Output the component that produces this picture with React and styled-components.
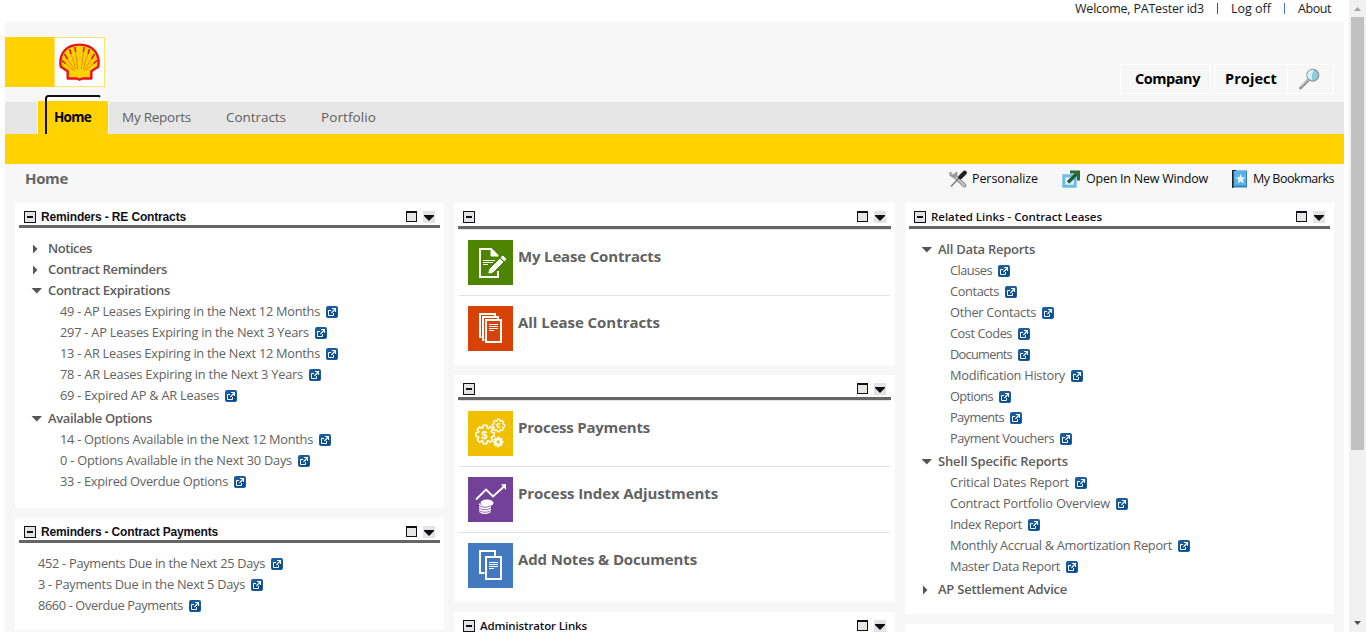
import React, { useLayoutEffect, useRef, useState } from "react";
import styled, { createGlobalStyle, css } from "styled-components";

const GlobalStyle = createGlobalStyle`
  * { box-sizing: border-box; }
  html, body { margin: 0; height: 100%; overflow: hidden; background: #fff; }
  body { font-family: "Open Sans", "Noto Sans", sans-serif; font-size: 13px; color: #5f5f5f; }
`;

const FitText = styled.span`
  display: inline-block;
  white-space: nowrap;
  flex: none;
`;

function Fit({ w, children }) {
  const ref = useRef(null);
  const [spacing, setSpacing] = useState(0);
  useLayoutEffect(() => {
    const natural = ref.current.getBoundingClientRect().width;
    setSpacing((w - natural) / children.length);
  }, []);
  return <FitText ref={ref} style={{ letterSpacing: spacing }}>{children}</FitText>;
}

const Window = styled.div`
  display: flex;
  height: 632px;
  overflow: hidden;
`;
const Page = styled.div`
  width: 1344px;
  padding-left: 5px;
  flex: none;
`;
const TopBar = styled.div`
  height: 22px;
  display: flex;
  justify-content: flex-end;
  padding: 0 13px 6px 0;
  align-items: center;
  color: #1c1c1c;
  font-size: 12.5px;
`;
const Divider = styled.span`
  width: 1px;
  height: 11px;
  margin: 0 13px;
  background: ${(p) => p.$color};
`;
const Body = styled.div`
  background: #f7f7f7;
  height: 610px;
`;
const Header = styled.div`
  height: 80px;
  display: flex;
  justify-content: space-between;
  padding: 15px 10px 0 0;
`;
const Logo = styled.div`
  display: flex;
  width: 100px;
  height: 50px;
  background: #ffd200;
  padding-left: 49px;
`;
const LogoBox = styled.div`
  width: 51px;
  height: 50px;
  background: #fff;
  border: 1px solid #ffe36b;
  padding: 5px 0 0 4px;
`;
const SearchTabs = styled.div`
  display: flex;
  margin-top: 27px;
`;
const SearchTab = styled.div`
  height: 30px;
  width: ${(p) => p.$w}px;
  margin-right: ${(p) => p.$gap || 0}px;
  padding: 0 0 ${(p) => (p.$joined ? 0 : 2)}px ${(p) => p.$pad}px;
  border: 1px solid #fff;
  border-left-width: ${(p) => (p.$joined ? 0 : 1)}px;
  display: flex;
  align-items: center;
  font-weight: 700;
  font-size: 14.5px;
  color: #000;
`;
const Nav = styled.div`
  height: 32px;
  background: #e6e6e6;
  display: flex;
  padding-left: 32px;
  font-size: 13.5px;
`;
const ActiveTab = styled.div`
  position: relative;
  width: 72px;
  height: 33px;
  margin-top: -1px;
  padding: 0 0 1px 16px;
  border: solid #fff;
  border-width: 0 1px;
  background: #ffd200;
  color: #000;
  font-weight: 700;
  display: flex;
  align-items: center;
`;
const FocusRing = styled.svg`
  position: absolute;
  left: -1px;
  top: -6px;
`;
const Tab = styled.div`
  display: flex;
  align-items: center;
  padding-bottom: 3px;
  margin-left: ${(p) => p.$gap}px;
`;
const YellowBar = styled.div`
  height: 30px;
  background: #ffd200;
`;
const TitleRow = styled.div`
  height: 39px;
  padding: 0 10px 9px 20px;
  display: flex;
  align-items: center;
  justify-content: space-between;
`;
const PageTitle = styled.div`
  font-size: 15px;
  font-weight: 700;
  color: #666;
  padding-bottom: 2px;
`;
const Tools = styled.div`
  display: flex;
  gap: 24px;
`;
const Tool = styled.div`
  display: flex;
  align-items: center;
  gap: 5px;
  color: #0c0c0c;
  font-size: 12.5px;
  ${FitText} { padding-bottom: 2px; }
`;
const Columns = styled.div`
  display: grid;
  grid-template-columns: 429px 441px 429px;
  gap: 10px;
  padding-left: 10px;
  height: 429px;
  overflow: hidden;
`;
const Column = styled.div`
  display: flex;
  flex-direction: column;
  gap: 10px;
`;
const Panel = styled.section`
  background: #fff;
  height: ${(p) => p.$h}px;
  flex: none;
  padding: 0 4px;
`;
const PanelHead = styled.div`
  height: ${(p) => p.$h}px;
  border-bottom: 3px solid #666;
  padding: 8px 5px 0;
  display: flex;
  align-items: flex-start;
`;
const PanelTitle = styled.div`
  flex: 1;
  margin-left: 5px;
  line-height: 12px;
  color: #101018;
  ${(p) =>
    p.$arial
      ? css`font: 700 12px/12px "Liberation Sans", Arial, sans-serif;`
      : css`font-size: 11.5px; font-weight: 600;`}
`;
const Controls = styled.div`
  display: flex;
  gap: 6px;
`;
const Tree = styled.div`
  padding: ${(p) => p.$top}px 0 0 ${(p) => p.$left}px;
`;
const Group = styled.div`
  height: 21px;
  margin-top: ${(p) => (p.$spaced ? 2 : 0)}px;
  padding-bottom: 2px;
  display: flex;
  align-items: center;
  font-weight: 600;
  color: #5c5c5c;
`;
const Arrow = styled.span`
  width: 17px;
  height: 12px;
  margin-top: 1px;
  display: flex;
  svg { display: block; }
`;
const LinkRow = styled.div`
  height: 21px;
  padding-left: ${(p) => p.$indent}px;
  display: flex;
  align-items: center;
  gap: 6px;
  font-size: 12.8px;
  color: #626262;
  ${FitText} { padding-bottom: 2px; }
`;
const TileRow = styled.div`
  height: 66px;
  margin: 0 1px;
  border-top: 1px solid #e3e3e3;
  padding: 10px 9px;
  display: flex;
  gap: 5px;
  font-size: 15px;
  font-weight: 700;
  line-height: 33px;
  color: #626262;
`;
const Tile = styled.div`
  width: 45px;
  height: 45px;
  background: ${(p) => p.$bg};
  svg { display: block; }
`;
const ScrollTrack = styled.div`
  width: 17px;
  margin-left: 5px;
  background: #f1f1f1;
  display: flex;
  flex-direction: column;
  align-items: center;
  justify-content: space-between;
`;
const ScrollThumb = styled.div`
  width: 13px;
  height: 433px;
  background: #c1c1c1;
  margin-bottom: auto;
`;

const ShellLogo = () => (
  <svg width="41" height="38" viewBox="0 0 41 38">
    <path d="M8.700 35.500v-7.200L1.800 23.800C-.5 10 8 1.600 20.500 1.600s21 8.400 18.700 22.200l-6.900 4.500v7.200h-8.600l-3.200 1.200-3.200-1.200z" fill="#ffd200" stroke="#e8111c" strokeWidth="2.400" strokeLinejoin="round" />
    <path d="m18.700 26-2.700-22M22.300 26 25 4M17 26.500 10.500 6M24 26.500 30.500 6M15.500 27 5.500 11M25.500 27l10-16M14.500 27.500 3 17.500M26.500 27.500 38 17.500" stroke="#f4701c" strokeWidth=".8" />
    <path d="m16.600 9-.6-5M24.400 9l.6-5M12 11l-1.500-5M29 11l1.500-5M8.500 16l-3-5M32.500 16l3-5M6.500 20.500l-3.500-3M34.500 20.500l3.500-3" stroke="#e8111c" strokeWidth="1.500" />
  </svg>
);
const SearchIcon = () => (
  <svg width="21" height="22" viewBox="0 0 21 22">
    <path d="M1.500 20 9 12.500" stroke="#8b8b8b" strokeWidth="2.600" strokeLinecap="round" />
    <path d="M1.500 19.300 9 11.800" stroke="#ddd" strokeWidth="1" />
    <circle cx="13.800" cy="7.200" r="5.900" fill="#8fcbd9" stroke="#8d979b" strokeWidth="1.200" />
    <path d="M9.500 10.500a5.300 5.300 0 0 1 5.500-8.500c-2 3-2.500 6-2 10.200z" fill="#d8eff4" />
  </svg>
);
const ToolsIcon = () => (
  <svg width="18" height="18" viewBox="0 0 18 18">
    <path d="m5 5.500 10.500 10" stroke="#858585" strokeWidth="3.800" strokeLinecap="round" />
    <path d="m5 5.500 10.500 10" stroke="#c4c4c4" strokeWidth="2.200" strokeLinecap="round" />
    <path d="M1.500 2 1.500 5l3 2L7.500 5l-.5-3" fill="none" stroke="#999" strokeWidth="2.200" />
    <path d="M2 16.500 10 8" stroke="#777" strokeWidth="1.300" />
    <path d="M11.500 7 15.700 2.700" stroke="#1f1f1f" strokeWidth="4.300" strokeLinecap="round" />
  </svg>
);
const NewWindowIcon = () => (
  <svg width="19" height="18" viewBox="0 0 19 18">
    <path d="M1.800 5.800h11.400v10.400H1.800z" fill="#e4f4fd" stroke="#6bbcec" strokeWidth="3" />
    <path d="M6 12.500 14.500 4" stroke="#1f5e2a" strokeWidth="3.400" />
    <path d="M8 .5h10v10h-3V5.700L13 3.500H8z" fill="#2d6b33" />
  </svg>
);
const BookmarkIcon = () => (
  <svg width="16" height="18" viewBox="0 0 16 18">
    <path d="M.5.500h14.500v17H.5z" fill="#2f86c6" />
    <path d="M2 1h12v14.500H2z" fill="#5cb0e4" />
    <path d="M0 0h1.500v18H0zM0 0h4v1H0z" fill="#1a2a35" />
    <path d="m8.700 4 1.400 3.300 3.600.2-2.800 2.300 1 3.600-3.200-2-3.100 2 .9-3.600-2.700-2.300 3.500-.2z" fill="#e4f4ff" />
  </svg>
);
const CollapseIcon = () => (
  <svg width="12" height="12" viewBox="0 0 12 12">
    <rect x=".5" y=".5" width="11" height="11" fill="#e3e3e3" stroke="#101018" />
    <path d="M3 5h6v2H3z" fill="#101018" />
  </svg>
);
const MaximizeIcon = () => (
  <svg width="11" height="12" viewBox="0 0 11 12">
    <rect x=".5" y=".5" width="10" height="10" fill="#e6e6e6" stroke="#101018" />
    <path d="M0 0h11v2H0z" fill="#101018" />
  </svg>
);
const MenuIcon = () => (
  <svg width="12" height="12" viewBox="0 0 12 12">
    <path d="M0 0h12v12H0z" fill="#e3e3e3" />
    <path d="M1 4h10v1l-5 5-5-5z" fill="#101018" />
  </svg>
);
const PopIcon = () => (
  <svg width="12" height="12" viewBox="0 0 12 12">
    <rect width="12" height="12" rx="2" fill="#1a5c9c" />
    <path d="M1 6h10v5H1z" fill="#074c8e" />
    <path d="M5 4.500H2.500v5h5V7" fill="none" stroke="#fff" />
    <path d="M6 2h4v4H9V4.200L5.700 7.500 5 6.800 8.200 3H6z" fill="#fff" />
  </svg>
);
const Triangle = ({ open }) => (
  <svg width="12" height="12" viewBox="0 0 12 12">
    <path d={open ? "M.5 4h10.500L5.800 9.500z" : "M2 2.500v9L6.500 7z"} fill="#555" />
  </svg>
);

const EditArt = () => (
  <svg width="45" height="45" fill="none" stroke="#fff">
    <path d="M30 31v6H12V9h11l7 7" strokeWidth="2" />
    <path d="M23 9v7h7z" fill="#fff" />
    <path d="M15 20.500h12M15 22.500h10M15 24.500h5" strokeWidth="1" />
    <path d="m19 35 2-6L32 18l4 4-11 11z" fill="#fff" stroke="#4d8400" strokeWidth="1" />
    <path d="m33 17.500 2-1.500 3 3-1.500 2z" fill="#fff" />
    <path d="m20 33 2.500 1.500" stroke="#4d8400" />
  </svg>
);
const StackArt = () => (
  <svg width="45" height="45" fill="none" stroke="#fff">
    <path d="M13.500 31H12V8h15v2M16.500 34H15V11h15v2" strokeWidth="2" />
    <path d="M18 14h15v22H18z" strokeWidth="2" />
    <path d="M21 18.500h9M21 20.500h9M21 22.500h9M21 24.500h5" strokeWidth="1" />
  </svg>
);
const DocsArt = () => (
  <svg width="45" height="45" fill="none" stroke="#fff" strokeWidth="2">
    <path d="M16.500 30H12V8h15v5" />
    <path d="M18 14h15v22H18z" />
    <path d="M21 19.500h9M21 21.500h9M21 23.500h9M21 25.500h5" strokeWidth="1" />
  </svg>
);
const gearPath = (cx, cy, outer, inner) => {
  const pts = [];
  for (let i = 0; i < 8; i++) {
    [[-0.31, inner], [-0.19, outer], [0.19, outer], [0.31, inner]].forEach(([o, r]) => {
      const a = (i * Math.PI) / 4 + o;
      pts.push(`${(cx + r * Math.cos(a)).toFixed(2)} ${(cy + r * Math.sin(a)).toFixed(2)}`);
    });
  }
  return `M${pts.join("L")}z`;
};
const CoinText = styled.text`
  font: 700 ${(p) => p.$size}px "Liberation Sans", Arial, sans-serif;
  fill: #fff;
  stroke: none;
  text-anchor: middle;
`;
const GearsArt = () => (
  <svg width="45" height="45" fill="none" stroke="#fff">
    <path d={gearPath(17, 23.500, 9.300, 7)} strokeWidth="1.500" />
    <path d={gearPath(30.500, 14.500, 6.200, 4.700)} strokeWidth="1.200" />
    <path d={gearPath(30.200, 31, 5, 3.800)} fill="#fff" strokeWidth=".5" />
    <circle cx="30.200" cy="31" r="1.700" fill="#f0c000" stroke="none" />
    <CoinText $size={11} x="16.500" y="27.500">$</CoinText>
    <CoinText $size={8} x="30.500" y="17.400">€</CoinText>
  </svg>
);
const ChartArt = () => (
  <svg width="45" height="45" fill="none" stroke="#fff">
    <path d="m8 22.500 10-10 7 7 11-10" strokeWidth="1.900" />
    <path d="M38 7v6l-5-5.500z" fill="#fff" stroke="none" />
    <ellipse cx="19" cy="26" rx="6.500" ry="3.500" fill="#fff" stroke="none" />
    <path d="M11 26v8c0 1.600 3 3 6 3s6-1.400 6-3v-6c-4 2-10 1-12-2z" fill="#fff" stroke="none" />
    <path d="M11 28.500c3 2.300 9 2.300 12 0M11 31c3 2.300 9 2.300 12 0M11 33.500c3 2.300 9 2.300 12 0" stroke="#734197" strokeWidth=".8" />
  </svg>
);

function PanelHeader({ h = 25, title, w, arial }) {
  return (
    <PanelHead $h={h}>
      <CollapseIcon />
      <PanelTitle $arial={arial}>{title && <Fit w={w}>{title}</Fit>}</PanelTitle>
      <Controls><MaximizeIcon /><MenuIcon /></Controls>
    </PanelHead>
  );
}

function TreeGroup({ label, w, links, spaced }) {
  return (
    <>
      <Group $spaced={spaced}>
        <Arrow><Triangle open={!!links} /></Arrow>
        <Fit w={w}>{label}</Fit>
      </Group>
      {links && links.map((l) => <LinkItem key={l[0]} indent={29} link={l} />)}
    </>
  );
}
const LinkItem = ({ link, indent }) => (
  <LinkRow $indent={indent}>
    <Fit w={link[1]}>{link[0]}</Fit>
    <PopIcon />
  </LinkRow>
);
const TileItem = ({ bg, art, label, w }) => (
  <TileRow>
    <Tile $bg={bg}>{art}</Tile>
    <Fit w={w}>{label}</Fit>
  </TileRow>
);

const expirations = [
  ["49 - AP Leases Expiring in the Next 12 Months", 260],
  ["297 - AP Leases Expiring in the Next 3 Years", 249],
  ["13 - AR Leases Expiring in the Next 12 Months", 260],
  ["78 - AR Leases Expiring in the Next 3 Years", 243],
  ["69 - Expired AP & AR Leases", 159],
];
const options = [
  ["14 - Options Available in the Next 12 Months", 253],
  ["0 - Options Available in the Next 30 Days", 232],
  ["33 - Expired Overdue Options", 168],
];
const payments = [
  ["452 - Payments Due in the Next 25 Days", 227],
  ["3 - Payments Due in the Next 5 Days", 207],
  ["8660 - Overdue Payments", 145],
];
const dataReports = [
  ["Clauses", 42], ["Contacts", 49], ["Other Contacts", 86], ["Cost Codes", 62],
  ["Documents", 62], ["Modification History", 115], ["Options", 43],
  ["Payments", 54], ["Payment Vouchers", 104],
];
const shellReports = [
  ["Critical Dates Report", 119], ["Contract Portfolio Overview", 160],
  ["Index Report", 72], ["Monthly Accrual & Amortization Report", 222],
  ["Master Data Report", 110],
];

export default function App() {
  return (
    <Window>
      <GlobalStyle />
      <Page>
        <TopBar>
          <Fit w={129}>Welcome, PATester id3</Fit>
          <Divider $color="#555" />
          <Fit w={40}>Log off</Fit>
          <Divider $color="#4a78b0" />
          <Fit w={33}>About</Fit>
        </TopBar>
        <Body>
          <Header>
            <Logo><LogoBox><ShellLogo /></LogoBox></Logo>
            <SearchTabs>
              <SearchTab $w={91} $pad={14} $gap={3}><Fit w={65}>Company</Fit></SearchTab>
              <SearchTab $w={74} $pad={10}><Fit w={52}>Project</Fit></SearchTab>
              <SearchTab $w={46} $pad={11} $joined><SearchIcon /></SearchTab>
            </SearchTabs>
          </Header>
          <Nav>
            <ActiveTab>
              <FocusRing width="72" height="39" viewBox="0 0 72 39">
                <path d="M9 6V3q0-2 2-2h52l5 2 3 3z" fill="#fff" />
                <path d="M9 39V3.500Q9 1 11.500 1H62l1 1" fill="none" stroke="#111" strokeWidth="2" />
              </FocusRing>
              <Fit w={37}>Home</Fit>
            </ActiveTab>
            <Tab $gap={13}><Fit w={69}>My Reports</Fit></Tab>
            <Tab $gap={35}><Fit w={60}>Contracts</Fit></Tab>
            <Tab $gap={35}><Fit w={55}>Portfolio</Fit></Tab>
          </Nav>
          <YellowBar />
          <TitleRow>
            <PageTitle><Fit w={43}>Home</Fit></PageTitle>
            <Tools>
              <Tool><ToolsIcon /><Fit w={66}>Personalize</Fit></Tool>
              <Tool><NewWindowIcon /><Fit w={122}>Open In New Window</Fit></Tool>
              <Tool><BookmarkIcon /><Fit w={81}>My Bookmarks</Fit></Tool>
            </Tools>
          </TitleRow>
          <Columns>
            <Column>
              <Panel $h={305}>
                <PanelHeader title="Reminders - RE Contracts" w={145} arial />
                <Tree $top={10} $left={12}>
                  <TreeGroup label="Notices" w={44} />
                  <TreeGroup label="Contract Reminders" w={119} />
                  <TreeGroup label="Contract Expirations" w={122} links={expirations} />
                  <TreeGroup label="Available Options" w={104} links={options} spaced />
                </Tree>
              </Panel>
              <Panel $h={112}>
                <PanelHeader title="Reminders - Contract Payments" w={177} arial />
                <Tree $top={10} $left={19}>
                  {payments.map((l) => <LinkItem key={l[0]} link={l} indent={0} />)}
                </Tree>
              </Panel>
            </Column>
            <Column>
              <Panel $h={162}>
                <PanelHeader h={26} />
                <TileItem bg="#4d8400" art={<EditArt />} label="My Lease Contracts" w={143} />
                <TileItem bg="#d94206" art={<StackArt />} label="All Lease Contracts" w={142} />
              </Panel>
              <Panel $h={227}>
                <PanelHeader />
                <TileItem bg="#f0c000" art={<GearsArt />} label="Process Payments" w={132} />
                <TileItem bg="#734197" art={<ChartArt />} label="Process Index Adjustments" w={200} />
                <TileItem bg="#437abf" art={<DocsArt />} label="Add Notes & Documents" w={179} />
              </Panel>
              <Panel $h={60}>
                <PanelHeader title="Administrator Links" w={107} />
              </Panel>
            </Column>
            <Column>
              <Panel $h={411}>
                <PanelHeader h={26} title="Related Links - Contract Leases" w={171} />
                <Tree $top={10} $left={12}>
                  <TreeGroup label="All Data Reports" w={97} links={dataReports} />
                  <TreeGroup label="Shell Specific Reports" w={130} links={shellReports} spaced />
                  <TreeGroup label="AP Settlement Advice" w={129} spaced />
                </Tree>
              </Panel>
              <Panel $h={60} />
            </Column>
          </Columns>
        </Body>
      </Page>
      <ScrollTrack>
        <svg width="17" height="17" viewBox="0 0 17 17"><path d="m5 11 3.500-4L12 11z" fill="#a3a3a3" /></svg>
        <ScrollThumb />
        <svg width="17" height="17" viewBox="0 0 17 17"><path d="m5 6 3.500 4L12 6z" fill="#505050" /></svg>
      </ScrollTrack>
    </Window>
  );
}
